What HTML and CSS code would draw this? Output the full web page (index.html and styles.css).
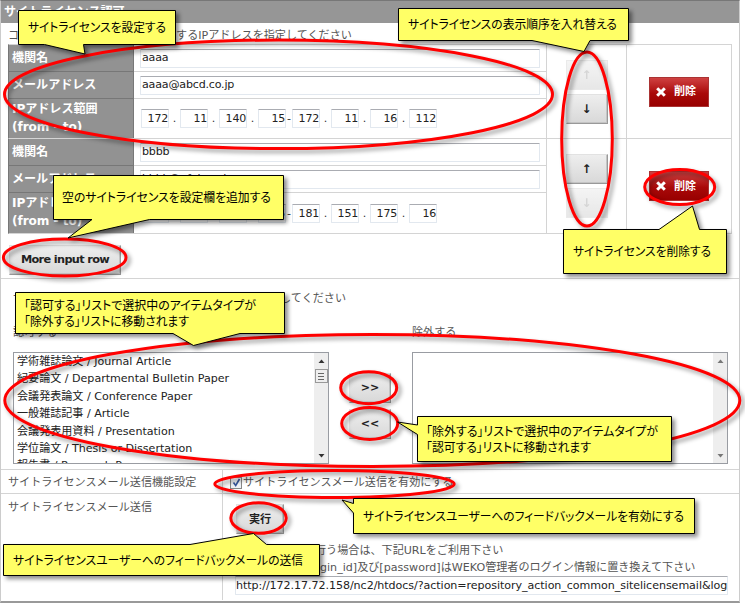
FILE: index.html
```html
<!DOCTYPE html>
<html lang="ja">
<head>
<meta charset="utf-8">
<title>サイトライセンス認可</title>
<link rel="stylesheet" href="styles.css">
</head>
<body>
<main class="frame">
  <h1 class="title">サイトライセンス認可</h1>

  <section class="licenses">
    <p class="lead">コ<span class="gap gap-lead"></span>するIPアドレスを指定してください</p>
    <div class="license">
      <div class="fields">
        <div class="th">機関名</div>
        <div class="td"><div class="input wide">aaaa</div></div>
        <div class="th">メールアドレス</div>
        <div class="td"><div class="input wide">aaaa@abcd.co.jp</div></div>
        <div class="th">IPアドレス範囲<br>(from - to)</div>
        <div class="td ip"><div class="input num">172</div><i>.</i><div class="input num">11</div><i>.</i><div class="input num">140</div><i>.</i><div class="input num">15</div><b>-</b><div class="input num">172</div><i>.</i><div class="input num">11</div><i>.</i><div class="input num">16</div><i>.</i><div class="input num">112</div></div>
      </div>
      <div class="order"><div class="btn sq arrow off">↑</div><div class="btn sq arrow">↓</div></div>
      <div class="remove"><div class="delete"><svg width="10" height="10" viewBox="0 0 10 10"><path d="M1.200 1.200 8.800 8.800M8.800 1.200 1.200 8.800" stroke="#fff" stroke-width="3"/></svg>削除</div></div>
    </div>
    <div class="license second">
      <div class="fields">
        <div class="th">機関名</div>
        <div class="td"><div class="input wide">bbbb</div></div>
        <div class="th">メールアドレス</div>
        <div class="td"><div class="input wide">bbbb@efgh.co.jp</div></div>
        <div class="th">IPアドレス範囲<br>(from - to)</div>
        <div class="td ip"><div class="input num"></div><i>.</i><div class="input num"></div><i>.</i><div class="input num"></div><i>.</i><div class="input num">15</div><b>-</b><div class="input num">181</div><i>.</i><div class="input num">151</div><i>.</i><div class="input num">175</div><i>.</i><div class="input num">16</div></div>
      </div>
      <div class="order"><div class="btn sq arrow">↑</div><div class="btn sq arrow off">↓</div></div>
      <div class="remove"><div class="delete"><svg width="10" height="10" viewBox="0 0 10 10"><path d="M1.200 1.200 8.800 8.800M8.800 1.200 1.200 8.800" stroke="#fff" stroke-width="3"/></svg>削除</div></div>
    </div>
    <div class="btn more">More input row</div>
  </section>

  <section class="types">
    <p class="lead">サ<span class="gap gap-types"></span>してください</p>
    <div class="labels"><span>認可する</span><span>除外する</span></div>
    <div class="lists">
      <div class="list">
        <ul>
          <li>学術雑誌論文 / Journal Article</li>
          <li>紀要論文 / Departmental Bulletin Paper</li>
          <li>会議発表論文 / Conference Paper</li>
          <li>一般雑誌記事 / Article</li>
          <li>会議発表用資料 / Presentation</li>
          <li>学位論文 / Thesis or Dissertation</li>
          <li>報告書 / Research Paper</li>
        </ul>
        <div class="scroll">
          <svg width="7" height="4" viewBox="0 0 7 4"><path d="M.5 4 3.5.5 6.5 4z" fill="#333"/></svg>
          <div class="thumb"><svg width="6" height="8" viewBox="0 0 6 8"><path d="M0 1.500h6M0 4.500h6M0 7.500h6" stroke="#666"/></svg></div>
          <svg width="7" height="4" viewBox="0 0 7 4"><path d="M.5 0h6L3.5 3.5z" fill="#333"/></svg>
        </div>
      </div>
      <div class="moves"><div class="btn sq">&gt;&gt;</div><div class="btn sq">&lt;&lt;</div></div>
      <div class="list">
        <ul></ul>
        <div class="scroll">
          <svg width="7" height="4" viewBox="0 0 7 4"><path d="M.5 4 3.5.5 6.5 4z" fill="#777"/></svg>
          <svg width="7" height="4" viewBox="0 0 7 4"><path d="M.5 0h6L3.5 3.5z" fill="#777"/></svg>
        </div>
      </div>
    </div>
  </section>

  <section class="row setting">
    <div class="name">サイトライセンスメール送信機能設定</div>
    <div class="value check"><span class="box"><svg width="9" height="9" viewBox="0 0 9 9"><path d="M1.5 4.5 3.7 7.5 7.5 1" fill="none" stroke="#35569b" stroke-width="1.6"/></svg></span>サイトライセンスメール送信を有効にする</div>
  </section>
  <section class="row send">
    <div class="name">サイトライセンスメール送信</div>
    <div class="value">
      <div class="btn run">実行</div>
      <p class="note"><span class="gap gap-note1"></span>行う場合は、下記URLをご利用下さい</p>
      <p class="note"><span class="gap gap-note2"></span>gin_id]及び[password]はWEKO管理者のログイン情報に置き換えて下さい</p>
      <div class="input url">http://172.17.72.158/nc2/htdocs/?action=repository_action_common_sitelicensemail&amp;log</div>
    </div>
  </section>
</main>

<svg class="notes" width="745" height="603" viewBox="0 0 745 603">
  <g class="rings">
    <ellipse cx="278.5" cy="94.3" rx="274" ry="54.3"/>
    <ellipse cx="587" cy="139" rx="25.3" ry="87"/>
    <ellipse cx="679.7" cy="187" rx="35" ry="17.5"/>
    <ellipse cx="64.7" cy="257.5" rx="61.3" ry="18.5"/>
    <ellipse cx="368.7" cy="387.7" rx="28" ry="16"/>
    <ellipse cx="369.7" cy="423.5" rx="28" ry="16"/>
    <ellipse cx="372.3" cy="400.5" rx="367.5" ry="66"/>
    <ellipse cx="334.5" cy="484" rx="119.7" ry="13.5"/>
    <ellipse cx="258.5" cy="518" rx="27.7" ry="15.3"/>
  </g>
  <g class="bubbles">
    <path d="M18.5 10.5H175.5V44.5H83.5L85 54 44.500 44.500H18.500Z"/>
    <path d="M398.500 8.500H628.500V40.500H590L584 51.500 532 40.500H398.500Z"/>
    <path d="M53.500 175.500H283.500V219.500H149.500L68 238 92 219.500H53.500Z"/>
    <path d="M563.500 229.500H659L692.500 206 699.500 229.500H726.500V273.500H563.500Z"/>
    <path d="M15.500 292.500H284.500V333.500H240L193.500 345.500 173 333.500H15.500Z"/>
    <path d="M417.500 416.500H671.500V461.500H417.500V434.500L397.500 422 417.500 425Z"/>
    <path d="M353.500 498.500H694.500V533.500H353.500V513L342 500 353.500 503.500Z"/>
    <path d="M3.500 544.500H190L253.500 533.500 266.500 544.500H319.500V575.500H3.500Z"/>
  </g>
  <g class="words">
    <text x="28" y="31.500" textLength="138" lengthAdjust="spacingAndGlyphs">サイトライセンスを設定する</text>
    <text x="408" y="28.500" textLength="209" lengthAdjust="spacingAndGlyphs">サイトライセンスの表示順序を入れ替える</text>
    <text x="62" y="201.500" textLength="209" lengthAdjust="spacingAndGlyphs">空のサイトライセンスを設定欄を追加する</text>
    <text x="573" y="255.500" textLength="138" lengthAdjust="spacingAndGlyphs">サイトライセンスを削除する</text>
    <text x="24" y="309.500" textLength="232" lengthAdjust="spacingAndGlyphs">「認可する」リストで選択中のアイテムタイプが</text>
    <text x="24" y="325.500" textLength="165" lengthAdjust="spacingAndGlyphs">「除外する」リストに移動されます</text>
    <text x="426" y="435.500" textLength="232" lengthAdjust="spacingAndGlyphs">「除外する」リストで選択中のアイテムタイプが</text>
    <text x="426" y="451.500" textLength="165" lengthAdjust="spacingAndGlyphs">「認可する」リストに移動されます</text>
    <text x="363" y="520.500" textLength="321" lengthAdjust="spacingAndGlyphs">サイトライセンスユーザーへのフィードバックメールを有効にする</text>
    <text x="13" y="564.500" textLength="290" lengthAdjust="spacingAndGlyphs">サイトライセンスユーザーへのフィードバックメールの送信</text>
  </g>
</svg>
</body>
</html>
```
FILE: styles.css
```css
* { box-sizing: border-box; }
body {
  margin: 0;
  width: 745px;
  height: 603px;
  overflow: hidden;
  position: relative;
  background: #fff;
  color: #555;
  font: 11.1px/17px "DejaVu Sans", "Noto Sans CJK JP", sans-serif;
  white-space: nowrap;
}
p, ul, h1 { margin: 0; padding: 0; }
.frame {
  width: 740px;
  height: 603px;
  border: 1px solid #ccc;
  border-top-color: #777;
  border-bottom: 2px solid #999;
}
.title {
  height: 22px;
  padding-left: 3px;
  background: #969696;
  color: #fff;
  font-size: 12.1px;
  line-height: 22px;
}
.gap { display: inline-block; height: 1px; }
.gap-lead { width: 157px; }
.gap-types { width: 256px; }
.gap-note1 { width: 79px; }
.gap-note2 { width: 84px; }

.licenses {
  height: 256px;
  padding: 4px 7px 0;
  border-bottom: 1px solid #d4d4d4;
}
.license {
  display: grid;
  grid-template-columns: 538px 80px 105px;
  width: 724px;
  height: 95px;
  border: 1px solid #d4d4d4;
  border-left-color: #777;
}
.licenses > .lead { height: 17px; }
.second { border-top: 0; }
.fields {
  display: grid;
  grid-template-columns: 125px 1fr;
  grid-template-rows: 27px 27px 1fr;
  border-right: 1px solid #d4d4d4;
}
.th {
  padding: 0 3px;
  background: #929292;
  border-bottom: 1px solid #777;
  border-right: 1px solid #777;
  color: #fff;
  font-weight: bold;
  font-size: 12.1px;
  line-height: 26px;
  letter-spacing: -0.05px;
}
.th:nth-of-type(5) { line-height: 18px; padding-top: 1px; border-bottom: 0; }
.td {
  display: flex;
  align-items: center;
  padding-left: 6px;
  border-bottom: 1px solid #d4d4d4;
}
.td:last-child { border-bottom: 0; }
.input {
  height: 19px;
  border: 1px solid #e2e8ef;
  border-top-color: #aaacb2;
  border-radius: 1px;
  background: #fff;
  color: #222;
  line-height: 17px;
  overflow: hidden;
}
.wide { width: 400px; padding-left: 1px; letter-spacing: -0.2px; line-height: 16px; }
.num { width: 28px; text-align: right; letter-spacing: -0.2px; font-size: 11px; }
.ip { color: #333; padding-left: 7px; }
.ip i { width: 11px; text-align: center; font-style: normal; }
.ip b { width: 6px; text-align: center; font-weight: normal; }
.order {
  display: flex;
  flex-direction: column;
  align-items: center;
  justify-content: center;
  gap: 4px;
  border-right: 1px solid #d4d4d4;
}
.remove { display: flex; align-items: center; justify-content: center; padding-right: 1px; }
.btn {
  height: 30px;
  background: linear-gradient(#eee, #d8d8d8);
  border: 1px solid #e2e2e2;
  border-right-color: #999;
  border-bottom-color: #999;
  box-shadow: inset -1px -1px #c4c4c4;
  color: #222;
  font-weight: bold;
  text-align: center;
  line-height: 28px;
}
.sq { width: 42px; }
.arrow { font-size: 12px; }
.off { opacity: .6; color: #bbb; border-color: #ddd; box-shadow: none; }
.delete {
  display: flex;
  align-items: center;
  gap: 8px;
  width: 60px;
  height: 30px;
  padding-left: 6px;
  background: linear-gradient(#cf4141, #a90909 55%, #980000);
  border: 1px solid #a33;
  color: #fff;
  font-weight: bold;
}
.more { width: 112px; margin: 11px 0 0 1px; letter-spacing: -0.65px; }
.more { font-size: 11.3px; }

.types { height: 191px; padding: 11px 11px 0 12px; border-bottom: 1px solid #d4d4d4; }
.labels { display: grid; grid-template-columns: 399px 1fr; margin-top: 17px; }
.lists { display: flex; margin-top: 11px; }
.list {
  display: flex;
  width: 316px;
  height: 112px;
  border: 1px solid #999ca2;
  overflow: hidden;
}
.list ul {
  flex: 1;
  padding-left: 3px;
  list-style: none;
  color: #222;
  line-height: 17.4px;
  letter-spacing: -0.02px;
}
.scroll {
  display: flex;
  flex-direction: column;
  align-items: center;
  width: 14px;
  padding: 6px 0 5px;
  background: #eee;
}
.scroll svg:last-child { margin-top: auto; }
.scroll .thumb svg { margin: 0; }
.thumb {
  display: flex;
  align-items: center;
  justify-content: center;
  width: 13px;
  height: 14px;
  margin-top: 6px;
  border: 1px solid #999;
  background: #eee;
}
.moves { display: flex; flex-direction: column; gap: 6px; width: 83px; padding: 21px 0 0 20px; }

.row { display: grid; grid-template-columns: 222px 1fr; }
.setting { height: 24px; border-bottom: 1px solid #d4d4d4; line-height: 25px; }
.name { padding-left: 7px; border-right: 1px solid #d4d4d4; }
.check { display: flex; align-items: center; padding-left: 7px; gap: 1px; }
.box {
  display: flex;
  align-items: center;
  justify-content: center;
  width: 12px;
  height: 12px;
  border: 1px solid #888;
  background: #eef1f5;
}
.send { height: 106px; }
.send .name { padding-top: 5px; }
.value { overflow: hidden; }
.run { width: 48px; margin: 10px 0 8px 13px; line-height: 30px; }
.note { padding-left: 13px; }
.url { width: 493px; margin: 0 0 0 12px; letter-spacing: -0.06px; line-height: 18px; }

.notes { position: absolute; left: 0; top: 0; }
.rings ellipse {
  fill: none;
  stroke: #f00;
  stroke-width: 3;
  filter: drop-shadow(3px 3px 2px rgba(0, 0, 0, .4));
}
.bubbles path {
  fill: #ff6;
  stroke: #000;
  stroke-width: 1;
  filter: drop-shadow(3px 3px 2px rgba(0, 0, 0, .45));
}
.words text {
  fill: #000;
  font: 12.5px "Noto Sans CJK JP", sans-serif;
  font-feature-settings: "palt";
}
```
